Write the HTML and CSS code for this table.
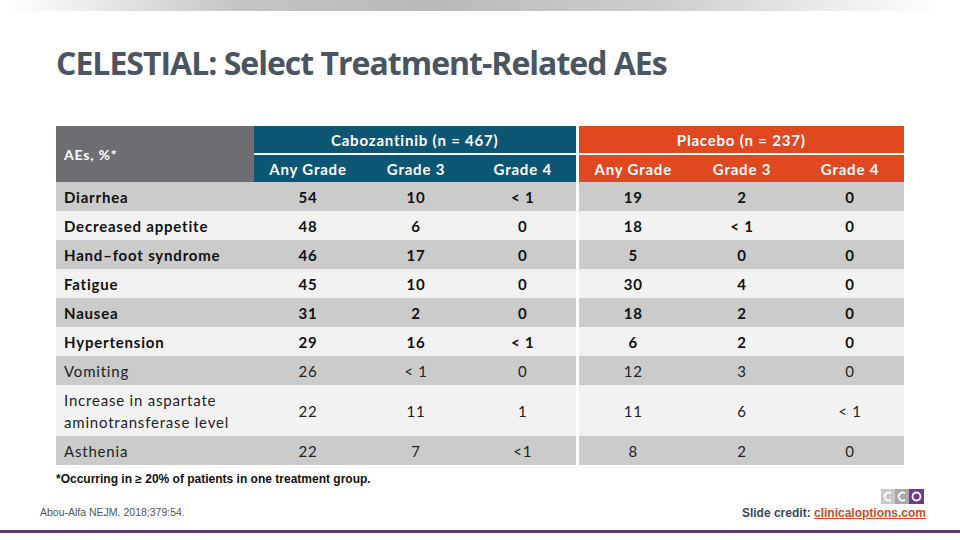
FILE: index.html
```html
<!DOCTYPE html>
<html>
<head>
<meta charset="utf-8">
<link rel="stylesheet" href="styles.css">
</head>
<body>
<div class="slide">
  <div class="topbar"></div>
  <h1 class="title">CELESTIAL: Select Treatment-Related AEs</h1>
  <table class="ae">
    <colgroup>
      <col class="c-label">
      <col class="c-num"><col class="c-num"><col class="c-num3">
      <col class="c-numg"><col class="c-num"><col class="c-num">
    </colgroup>
    <thead>
      <tr class="h1">
        <th rowspan="2" class="h-label">AEs, %*</th>
        <th colspan="3" class="h-cab grp">Cabozantinib (n = 467)</th>
        <th colspan="3" class="h-pla grp sep">Placebo (n = 237)</th>
      </tr>
      <tr class="h2">
        <th class="h-cab">Any Grade</th><th class="h-cab">Grade 3</th><th class="h-cab">Grade 4</th>
        <th class="h-pla sep">Any Grade</th><th class="h-pla">Grade 3</th><th class="h-pla">Grade 4</th>
      </tr>
    </thead>
    <tbody>
      <tr class="dark"><td>Diarrhea</td><td>54</td><td>10</td><td>&lt; 1</td><td class="sep">19</td><td>2</td><td>0</td></tr>
      <tr class="light"><td>Decreased appetite</td><td>48</td><td>6</td><td>0</td><td class="sep">18</td><td>&lt; 1</td><td>0</td></tr>
      <tr class="dark"><td>Hand–foot syndrome</td><td>46</td><td>17</td><td>0</td><td class="sep">5</td><td>0</td><td>0</td></tr>
      <tr class="light"><td>Fatigue</td><td>45</td><td>10</td><td>0</td><td class="sep">30</td><td>4</td><td>0</td></tr>
      <tr class="dark"><td>Nausea</td><td>31</td><td>2</td><td>0</td><td class="sep">18</td><td>2</td><td>0</td></tr>
      <tr class="light"><td>Hypertension</td><td>29</td><td>16</td><td>&lt; 1</td><td class="sep">6</td><td>2</td><td>0</td></tr>
      <tr class="dark reg"><td>Vomiting</td><td>26</td><td>&lt; 1</td><td>0</td><td class="sep">12</td><td>3</td><td>0</td></tr>
      <tr class="light reg tall"><td>Increase in aspartate<br>aminotransferase level</td><td>22</td><td>11</td><td>1</td><td class="sep">11</td><td>6</td><td>&lt; 1</td></tr>
      <tr class="dark reg"><td>Asthenia</td><td>22</td><td>7</td><td>&lt;1</td><td class="sep">8</td><td>2</td><td>0</td></tr>
    </tbody>
  </table>
  <p class="footnote">*Occurring in ≥ 20% of patients in one treatment group.</p>
  <div class="footer">
    <span class="cite">Abou-Alfa NEJM. 2018;379:54.</span>
    <div class="credit">
      <svg class="logo" width="43" height="15" viewBox="0 0 43 15" aria-hidden="true">
        <rect x="0" y="0" width="14" height="15" fill="#c8c9cb"/>
        <rect x="14" y="0" width="14" height="15" fill="#a7a9ac"/>
        <rect x="28" y="0" width="15" height="15" fill="#6b3d8c"/>
        <path d="M10 4.2 A4 4 0 1 0 10 10.8" fill="none" stroke="#fff" stroke-width="1.8"/>
        <path d="M24 4.2 A4 4 0 1 0 24 10.8" fill="none" stroke="#fff" stroke-width="1.8"/>
        <circle cx="35.5" cy="7.5" r="4" fill="none" stroke="#fff" stroke-width="1.8"/>
      </svg>
      <span class="credit-text">Slide credit: <a class="link">clinicaloptions.com</a></span>
    </div>
  </div>
  <div class="bottomline"></div>
</div>
</body>
</html>
```

FILE: styles.css
```css
* { box-sizing: border-box; }
html, body { margin: 0; padding: 0; background: #fff; }
.slide {
  width: 960px;
  height: 540px;
  display: flex;
  flex-direction: column;
  font-family: "Lato", "Liberation Sans", sans-serif;
}
.topbar {
  height: 11px;
  background: linear-gradient(90deg, #ffffff 1%, #c4c4c4 25%, #b9b9b9 45%, #cfcfcf 70%, #ffffff 98%);
}
.title {
  margin: 35px 0 0 56px;
  height: 80px;
  font-family: "Open Sans", sans-serif;
  font-weight: 700;
  font-size: 32px;
  letter-spacing: -1px;
  line-height: 34px;
  color: #4a5561;
}
.ae {
  margin-left: 56px;
  width: 848px;
  border-collapse: collapse;
  table-layout: fixed;
  font-size: 15px;
  letter-spacing: 0.8px;
}
.c-label { width: 198px; }
.c-num { width: 108px; }
.c-num3 { width: 107px; }
.c-numg { width: 111px; }
.ae th, .ae td { padding: 0; }
.ae th {
  color: #fff;
  font-weight: 700;
  text-align: center;
  height: 28px;
}
.ae .h-label {
  background: #6d6e71;
  text-align: left;
  padding: 0 0 0 8px;
  vertical-align: middle;
  font-size: 14px;
}
.ae .h-cab { background: #0c5674; }
.ae .h-pla { background: #e0491f; }
.ae .grp { border-bottom: 2px solid #fff; height: 28px; }
.ae .sep { border-left: 3px solid #fff; }
.ae td {
  height: 29px;
  text-align: center;
  font-weight: 700;
  color: #111;
}
.ae td:first-child {
  text-align: left;
  padding-left: 8px;
}
.ae tr.dark td { background: #cbcbcb; }
.ae tr.light td { background: #f2f2f2; }
.ae tr.reg td { font-weight: 400; color: #222; }
.ae tr.tall td { height: 51px; line-height: 22px; }
.footnote {
  margin: 7px 0 0 56px;
  font-family: "Liberation Sans", sans-serif;
  font-weight: 700;
  font-size: 12px;
  color: #111;
}
.footer {
  margin: 3px 34px 0 40px;
  display: flex;
  justify-content: space-between;
  align-items: flex-end;
  height: 32px;
}
.cite {
  font-family: "Liberation Sans", sans-serif;
  font-size: 10.5px;
  color: #555;
  padding-bottom: 3px;
}
.credit {
  display: flex;
  flex-direction: column;
  align-items: flex-end;
}
.logo { display: block; margin-right: 2px; margin-bottom: 1px; }
.credit-text {
  font-family: "Liberation Sans", sans-serif;
  font-weight: 700;
  font-size: 12px;
  color: #3d4954;
  line-height: 16px;
}
.link {
  color: #cf4a1e;
  text-decoration: underline;
}
.bottomline {
  margin-top: auto;
  height: 3px;
  background: #5e3a6c;
  margin-bottom: 7px;
}
```
